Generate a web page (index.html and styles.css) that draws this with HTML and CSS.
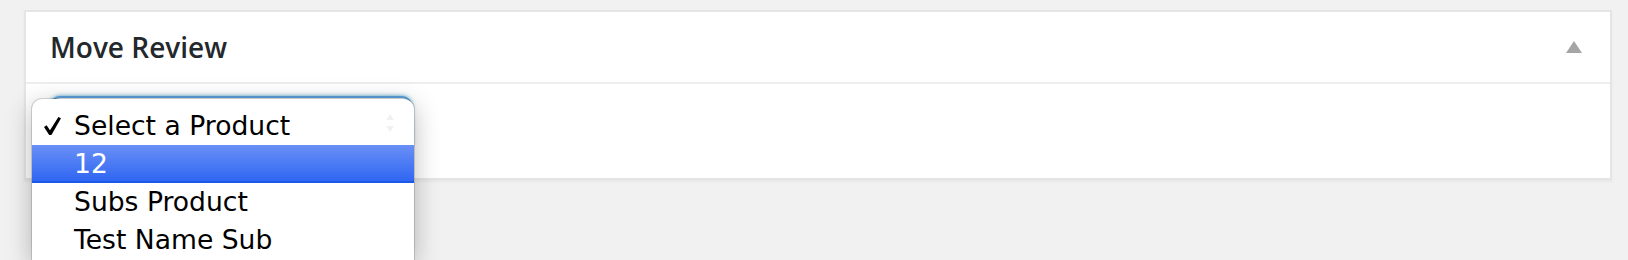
FILE: index.html
```html
<!DOCTYPE html>
<html>
<head>
<meta charset="utf-8">
<link rel="stylesheet" href="styles.css">
</head>
<body>
<div class="postbox">
  <div class="postbox-header">
    <h2 class="hndle">Move Review</h2>
    <button class="handlediv" type="button"><span class="toggle-indicator"></span></button>
  </div>
  <div class="inside">
    <div class="select-wrap">
      <div class="select"></div>
      <ul class="menu">
        <li class="item">
          <svg class="check" viewBox="0 0 17 18" width="17" height="18"><path d="M0 10 L2.6 8.2 L6 13.2 L14.4 0 L17 1.2 L7.4 18 L5.2 18 Z" fill="#000"/></svg>
          Select a Product
          <svg class="arrows" viewBox="0 0 10 22" width="10" height="22"><path d="M1 8 L5 2 L9 8 Z M1 14 L5 20 L9 14 Z" fill="#f1f1f1"/></svg>
        </li>
        <li class="item active">12</li>
        <li class="item">Subs Product</li>
        <li class="item">Test Name Sub</li>
      </ul>
    </div>
  </div>
</div>
</body>
</html>
```
FILE: styles.css
```css
html, body {
  margin: 0;
  padding: 0;
  background: #f1f1f1;
}

html {
  height: 260px;
}

body {
  box-sizing: border-box;
  height: 260px;
  padding-top: 10px;
}

.postbox {
  margin: 0 16px 0 24px;
  background: #fff;
  border: 2px solid #e5e5e5;
  box-shadow: 0 2px 2px rgba(0, 0, 0, 0.04);
}

.postbox-header {
  display: flex;
  align-items: center;
  justify-content: space-between;
  border-bottom: 2px solid #eeeeee;
}

.hndle {
  margin: 0;
  padding: 16px 24px;
  font-family: "Open Sans", sans-serif;
  font-weight: 600;
  font-size: 28px;
  line-height: 38px;
  color: #23282d;
}

.handlediv {
  border: 0;
  background: none;
  padding: 0;
  margin-right: 28px;
  display: flex;
}

.toggle-indicator {
  width: 0;
  height: 0;
  border-left: 8px solid transparent;
  border-right: 8px solid transparent;
  border-bottom: 12px solid #a5a5a5;
}

.inside {
  padding: 12px 24px 26px;
  height: 56px;
}

.select-wrap {
  position: relative;
  width: 362px;
  height: 56px;
}

.select {
  height: 52px;
  border: 2px solid #5b9dd9;
  border-radius: 10px;
  box-shadow: 0 0 4px rgba(30, 140, 190, 0.8);
  background: #fff;
}

.menu {
  position: absolute;
  z-index: 10;
  left: -18px;
  top: 3px;
  width: 382px;
  margin: 0;
  padding: 8px 0 1px;
  list-style: none;
  background: #fff;
  border-radius: 10px 10px 0 0;
  box-shadow: 0 0 0 1px rgba(0, 0, 0, 0.14), 0 6px 26px rgba(0, 0, 0, 0.28);
  font-family: "DejaVu Sans", "Liberation Sans", sans-serif;
  font-size: 26.6px;
  color: #000;
}

.item {
  position: relative;
  height: 38px;
  line-height: 38px;
  padding-left: 42px;
  white-space: nowrap;
}

.item.active {
  color: #fff;
  background: linear-gradient(#6a90f6, #2c64f2);
  box-shadow: inset 0 -2px 0 #1a58e8;
}

.check {
  position: absolute;
  left: 12px;
  top: 10px;
}

.arrows {
  position: absolute;
  left: 353px;
  top: 5px;
}
```
